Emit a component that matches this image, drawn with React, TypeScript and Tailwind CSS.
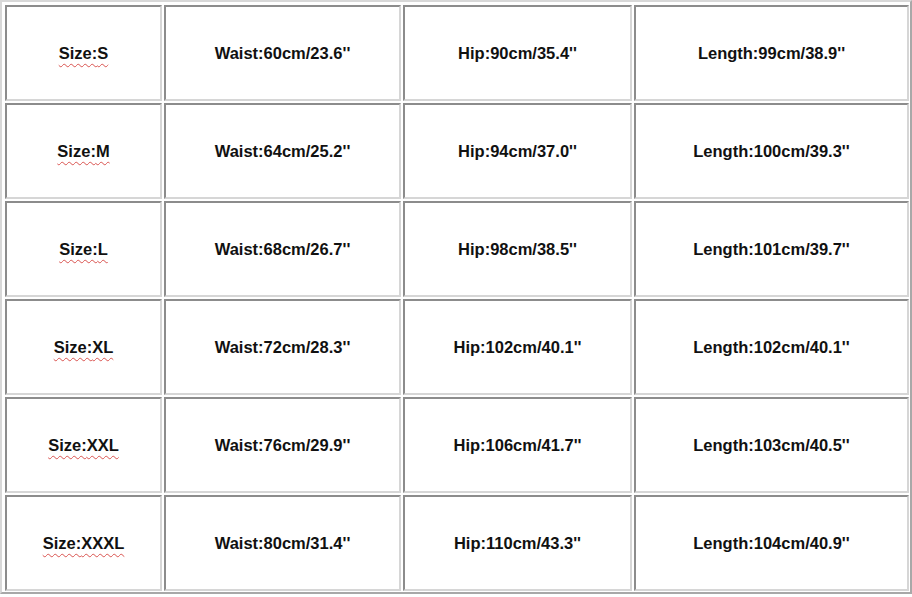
const rows = [
  ["S", "60cm/23.6", "90cm/35.4", "99cm/38.9"],
  ["M", "64cm/25.2", "94cm/37.0", "100cm/39.3"],
  ["L", "68cm/26.7", "98cm/38.5", "101cm/39.7"],
  ["XL", "72cm/28.3", "102cm/40.1", "102cm/40.1"],
  ["XXL", "76cm/29.9", "106cm/41.7", "103cm/40.5"],
  ["XXXL", "80cm/31.4", "110cm/43.3", "104cm/40.9"],
];

function Cell({ children }: { children: React.ReactNode }) {
  return (
    <div className="flex items-center justify-center border-2 border-t-[#8c8c8c] border-l-[#8c8c8c] border-r-[#d6d6d6] border-b-[#d6d6d6] bg-white pt-px">
      {children}
    </div>
  );
}

export default function App() {
  return (
    <div className="h-[597px] w-[912px] bg-white font-['Liberation_Sans',Arial,sans-serif] text-[16.5px] font-bold text-[#111]">
      <div className="grid grid-cols-[157px_237px_229px_275px] grid-rows-[repeat(6,96px)] gap-[2px] border-2 border-t-[#d8d8d8] border-l-[#d8d8d8] border-r-[#a8a8a8] border-b-[#a8a8a8] pt-[3px] pl-[3px] pr-px pb-px">
        {rows.map(([size, waist, hip, len]) => (
          <div key={size} className="contents">
            <Cell>
              <span className="underline decoration-[#d9534f] decoration-wavy decoration-1 underline-offset-[4px]">
                Size:{size}
              </span>
            </Cell>
            <Cell>Waist:{waist}''</Cell>
            <Cell>Hip:{hip}''</Cell>
            <Cell>Length:{len}''</Cell>
          </div>
        ))}
      </div>
    </div>
  );
}
